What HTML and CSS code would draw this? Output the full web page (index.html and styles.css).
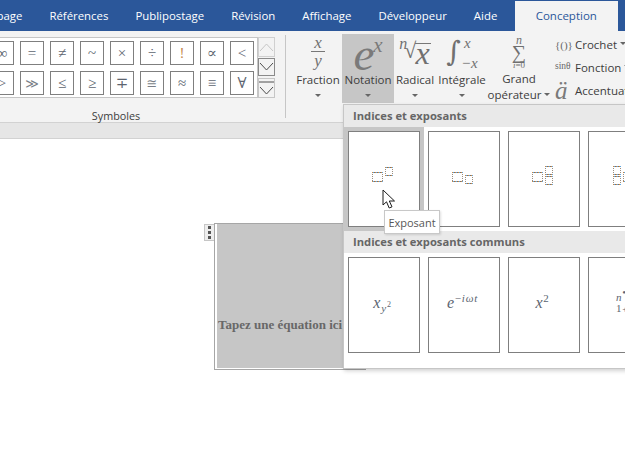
FILE: index.html
```html
<!DOCTYPE html>
<html lang="fr">
<head>
<meta charset="utf-8">
<title>Conception</title>
<link rel="stylesheet" href="styles.css">
</head>
<body>
<svg class="defs" width="0" height="0" aria-hidden="true">
  <defs>
    <g id="big">
      <path class="h1" d="M0 .5H11M0 9.500H11"/><path class="h2" d="M0 .5H11M0 9.500H11"/><path class="h3" d="M0 .5H11M0 9.500H11"/>
      <path class="v" d="M.5 2V9M10.500 2V9"/>
    </g>
    <g id="small">
      <path class="h1" d="M0 .5H8M0 8.500H8"/><path class="h2" d="M0 .5H8M0 8.500H8"/><path class="h3" d="M0 .5H8M0 8.500H8"/>
      <path class="v" d="M.5 2V8M7.500 2V8"/>
    </g>
  </defs>
</svg>
<div class="page">
  <nav class="tabs">
    <span class="tab first">page</span>
    <span class="tab">Références</span>
    <span class="tab">Publipostage</span>
    <span class="tab">Révision</span>
    <span class="tab">Affichage</span>
    <span class="tab">Développeur</span>
    <span class="tab aide">Aide</span>
    <span class="tab active">Conception</span>
  </nav>
  <section class="ribbon">
    <div class="group-symbols">
      <div class="gallery-wrap">
        <div class="gallery">
          <span class="sym">∞</span><span class="sym">=</span><span class="sym">≠</span><span class="sym">~</span><span class="sym">×</span><span class="sym">÷</span><span class="sym orange">!</span><span class="sym">∝</span><span class="sym">&lt;</span>
          <span class="sym">&gt;</span><span class="sym thin">≫</span><span class="sym">≤</span><span class="sym">≥</span><span class="sym">∓</span><span class="sym thin">≅</span><span class="sym">≈</span><span class="sym">≡</span><span class="sym">∀</span>
        </div>
        <div class="scroller">
          <span class="scroll-btn up"><svg width="15" height="10" viewBox="0 0 15 10"><path d="M1 9 7.5 2 14 9" class="chev light"/></svg></span>
          <span class="scroll-btn"><svg width="15" height="10" viewBox="0 0 15 10"><path d="M1 1 7.5 8 14 1" class="chev"/></svg></span>
          <span class="scroll-btn more"><svg width="15" height="15" viewBox="0 0 15 15"><path d="M0 1H15M1 6 7.5 13 14 6" class="chev"/></svg></span>
        </div>
      </div>
      <div class="group-label">Symboles</div>
    </div>
    <div class="separator"></div>
    <div class="eq-btn w-fraction">
      <div class="eq-icon frac"><i>x</i><b></b><i>y</i></div>
      <div class="eq-label">Fraction</div>
      <div class="caret"></div>
    </div>
    <div class="eq-btn w-notation pressed">
      <div class="eq-icon notation"><i class="e">e</i><i class="x">x</i></div>
      <div class="eq-label">Notation</div>
      <div class="caret"></div>
    </div>
    <div class="eq-btn w-radical">
      <div class="eq-icon radical"><i class="n">n</i><span class="root">√</span><i class="rad">x</i></div>
      <div class="eq-label">Radical</div>
      <div class="caret"></div>
    </div>
    <div class="eq-btn w-integral">
      <div class="eq-icon integral"><span class="int">∫</span><span class="limits"><i>x</i><i class="lower">−x</i></span></div>
      <div class="eq-label">Intégrale</div>
      <div class="caret"></div>
    </div>
    <div class="eq-btn w-grand">
      <div class="eq-icon sum"><i>n</i><span class="sigma">∑</span><span class="low"><i>i</i>=0</span></div>
      <div class="eq-label two">Grand</div>
      <div class="eq-label inline-caret">opérateur<span class="caret small"></span></div>
    </div>
    <div class="side-col">
      <div class="side-row"><span class="mini">{()}</span><span>Crochet</span><span class="caret small"></span></div>
      <div class="side-row"><span class="mini sin">sinθ</span><span>Fonction</span><span class="caret small"></span></div>
      <div class="side-row"><i class="umlaut">ä</i><span>Accentuation</span></div>
    </div>
  </section>
  <div class="band"></div>
  <main class="doc">
    <div class="handle"><span></span><span></span><span></span></div>
    <div class="equation"><div class="equation-fill">Tapez une équation ici</div></div>
  </main>

  <aside class="popup">
    <h3 class="popup-head">Indices et exposants</h3>
    <div class="popup-row">
      <div class="cell selected"><div class="box">
        <svg width="70" height="94" viewBox="0 0 70 94"><use href="#big" x="23" y="40"/><use href="#small" x="36" y="35"/></svg>
      </div></div>
      <div class="cell"><div class="box">
        <svg width="70" height="94" viewBox="0 0 70 94"><use href="#big" x="23" y="40"/><use href="#small" x="36" y="43"/></svg>
      </div></div>
      <div class="cell"><div class="box">
        <svg width="70" height="94" viewBox="0 0 70 94"><use href="#big" x="23" y="40"/><use href="#small" x="36" y="34"/><use href="#small" x="36" y="44"/></svg>
      </div></div>
      <div class="cell"><div class="box">
        <svg width="70" height="94" viewBox="0 0 70 94"><use href="#small" x="24" y="34"/><use href="#small" x="24" y="44"/><use href="#big" x="34" y="40"/></svg>
      </div></div>
    </div>
    <h3 class="popup-head">Indices et exposants communs</h3>
    <div class="popup-row second">
      <div class="cell"><div class="box math"><span><i>x</i><sub><i>y</i><sup>2</sup></sub></span></div></div>
      <div class="cell"><div class="box math"><span><i>e</i><sup>−<i>iωt</i></sup></span></div></div>
      <div class="cell"><div class="box math"><span><i>x</i><sup>2</sup></span></div></div>
      <div class="cell"><div class="box math clipped"><span class="stack"><i>n</i><sup>•</sup><br>1<small>+</small></span></div></div>
    </div>
  </aside>

  <svg class="cursor" width="14" height="21" viewBox="0 0 14 21"><path d="M1 1V16L4.500 12.800 7.200 19 10 17.800 7.300 12H12.500Z" fill="#fff" stroke="#1c1c1c" stroke-width="1"/></svg>
  <div class="tooltip">Exposant</div>
</div>
</body>
</html>
```
FILE: styles.css
```css
* { box-sizing: border-box; }
html, body { margin: 0; padding: 0; }
body { background: #fff; font-family: "Open Sans", "Noto Sans", sans-serif; }
.defs { position: absolute; }
.page { position: relative; width: 625px; height: 457px; overflow: hidden; background: #fff; }

.tabs { display: flex; height: 31px; background: #2b579a; color: #fff; font-size: 11.400px; margin-left: -17px; white-space: nowrap; }
.tab { padding: 0 13.500px; line-height: 31px; }
.tab.aide { margin-right: 4px; }
.tab.active { margin-top: 1px; width: 103px; padding: 0; text-align: center; background: #f3f3f3; color: #2b579a; line-height: 29px; font-size: 11.500px; }

.ribbon { display: flex; height: 92px; background: #f3f3f3; border-bottom: 1px solid #d2d2d2; }
.group-symbols { width: 285px; flex: none; padding-top: 6px; }
.gallery-wrap { display: flex; height: 61px; }
.gallery { width: 258px; height: 61px; background: #fff; border: 1px solid #c6c6c6; border-left: 0; display: grid; grid-template-columns: repeat(9, 24px); grid-auto-rows: 24px; gap: 6px; padding-top: 3px; justify-content: end; padding-right: 3px; }
.sym { border: 1px solid #7f7f7f; background: #fff; color: #5d6570; display: flex; align-items: center; justify-content: center; font: 15px "Liberation Serif", "DejaVu Serif", serif; line-height: 1; }
.sym.thin { font: 13px "DejaVu Sans", sans-serif; color: #7a7f88; }
.orange { color: #c58a4f; }
.scroller { width: 17px; display: flex; flex-direction: column; gap: 1px; }
.scroll-btn { height: 19px; border: 1px solid #8a8a8a; display: flex; align-items: center; justify-content: center; background: #f3f3f3; }
.scroll-btn.up { height: 20px; border-color: #d0d0d0; }
.scroll-btn.more { height: 20px; margin-top: 1px; border-color: #c6c6c6; }
.chev { fill: none; stroke: #4e4e4e; stroke-width: 1; }
.chev.light { stroke: #c6c6c6; }
.group-label { width: 232px; text-align: center; font-size: 10.800px; color: #3d3d3d; line-height: 15px; margin-top: 10px; }
.separator { width: 1px; height: 83px; margin-top: 4px; background: #c6c6c6; flex: none; }

.eq-btn { flex: none; height: 69px; margin-top: 3px; display: flex; flex-direction: column; align-items: center; color: #444; font-size: 11.500px; }
.eq-btn.pressed { background: #c6c6c6; }
.w-fraction { width: 44px; margin-left: 10px; margin-right: 2px; }
.w-notation { width: 52px; }
.w-radical { width: 42px; }
.w-integral { width: 48px; margin-left: 2px; }
.w-grand { width: 62px; margin-left: 2px; }
.eq-icon { height: 36px; flex: none; font-family: "Liberation Serif", serif; color: #707070; display: flex; }
.eq-label { line-height: 16px; margin-top: 2px; white-space: nowrap; color: #3d3d3d; }
.caret { width: 0; height: 0; border: 3px solid transparent; border-top: 3px solid #666; border-bottom: 0; margin-top: 6px; }
.caret.small { display: inline-block; margin: 0 0 2px 3px; vertical-align: middle; }

.frac { flex-direction: column; align-items: center; font-size: 17px; line-height: 14px; padding-top: 2px; }
.frac b { display: block; width: 14px; height: 1px; background: #777; margin: 1px 0 2px; }
.notation { align-items: flex-start; }
.notation .e { font-size: 47px; line-height: 40px; color: #7a7a7a; }
.notation .x { font-size: 21px; line-height: 20px; margin-top: 1px; margin-left: -1px; color: #7a7a7a; }
.radical { align-items: flex-start; padding-top: 4px; }
.radical .n { font-size: 16px; line-height: 12px; }
.radical .root { font-size: 22px; line-height: 26px; margin-left: -3px; font-family: "Liberation Serif", serif; }
.radical .rad { font-size: 32px; line-height: 19px; border-top: 1px solid #777; margin-top: 5px; height: 22px; margin-left: -1px; padding-right: 1px; }
.integral { align-items: flex-start; padding-top: 2px; }
.integral .int { font-size: 28px; line-height: 32px; font-family: "DejaVu Serif", serif; }
.integral .limits { display: flex; flex-direction: column; font-size: 15px; line-height: 12px; padding-top: 1px; margin-left: 3px; gap: 8px; }
.integral .lower { margin-left: -3px; }
.sum { flex-direction: column; align-items: center; padding-top: 2px; font-size: 12px; line-height: 8px; }
.sum .sigma { font-size: 20px; line-height: 17px; font-family: "Liberation Serif", serif; }
.sum .low { font-size: 9px; line-height: 9px; }
.eq-label.two { margin-top: 1px; }
.w-grand .inline-caret { margin-top: 0; }
.w-grand .eq-label { color: #3d3d3d; line-height: 16px; }

.side-col { flex: none; margin-left: 5px; display: flex; flex-direction: column; padding-top: 2px; font-size: 11.500px; color: #3d3d3d; white-space: nowrap; }
.side-row { display: flex; align-items: center; height: 23px; }
.mini { font: 11px "Liberation Serif", serif; color: #666; width: 20px; flex: none; }
.mini.sin { font-size: 9.500px; margin-top: -3px; }
.umlaut { font: italic 25px "Liberation Serif", serif; color: #7a7a7a; width: 20px; flex: none; line-height: 22px; }

.band { height: 16px; background: #e6e6e6; border-bottom: 1px solid #d2d2d2; }
.doc { display: flex; align-items: flex-start; padding: 84px 0 0 204px; }
.handle { width: 11px; height: 17px; margin-top: 1px; border: 1px solid #c6c6c6; background: #eee; display: flex; flex-direction: column; align-items: center; justify-content: center; gap: 2px; }
.handle span { width: 3px; height: 3px; background: #555; }
.equation { width: 152px; height: 147px; margin-left: -1px; border: 1px solid #a6a6a6; padding: 0 0 1px 2px; background: #fff; }
.equation-fill { height: 100%; background: #c6c6c6; padding: 93px 0 0 1px; font: bold 13px/16px "Liberation Serif", serif; color: #686868; white-space: nowrap; }

.popup { position: absolute; left: 343px; top: 104px; width: 300px; height: 265px; background: #fff; border: 1px solid #c6c6c6; box-shadow: 1px 2px 4px rgba(0,0,0,.18); }
.popup-head { margin: 0; height: 22px; background: #e9e9e9; padding-left: 9px; font-size: 11.200px; line-height: 21px; font-weight: 700; color: #666; }
.popup-row { display: flex; height: 104px; }
.cell { width: 80px; flex: none; padding: 4px; }
.cell.selected { background: #c6c6c6; }
.box { width: 72px; height: 96px; background: #fff; border: 1px solid #7f7f7f; display: flex; align-items: center; justify-content: center; }
.box svg { display: block; }
.h1, .h2, .h3, .v { fill: none; stroke-width: 1; }
.h1 { stroke: #d0893f; stroke-dasharray: 1 2; }
.h2 { stroke: #77706e; stroke-dasharray: 1 2; stroke-dashoffset: 1; }
.h3 { stroke: #5fa6e0; stroke-dasharray: 1 2; stroke-dashoffset: 2; }
.v { stroke: #9a8d80; stroke-dasharray: 1 1; }
.math { font: 16px "Liberation Serif", serif; color: #5b6470; letter-spacing: .8px; padding: 0 3px 4px 0; }
.math sup, .math sub { font-size: 11px; line-height: 0; }
.math sub sup { font-size: 8px; }
.clipped { justify-content: flex-start; padding: 0 0 4px 27px; }
.stack { font-size: 11px; line-height: 11px; }
.popup-row.second { height: 106px; }

.cursor { position: absolute; left: 382px; top: 189px; }
.tooltip { position: absolute; left: 384px; top: 210px; width: 56px; height: 24px; background: #fff; border: 1px solid #c8c8c8; box-shadow: 1px 1px 2px rgba(0,0,0,.12); font-size: 11px; line-height: 23px; text-align: center; color: #575757; }
```
